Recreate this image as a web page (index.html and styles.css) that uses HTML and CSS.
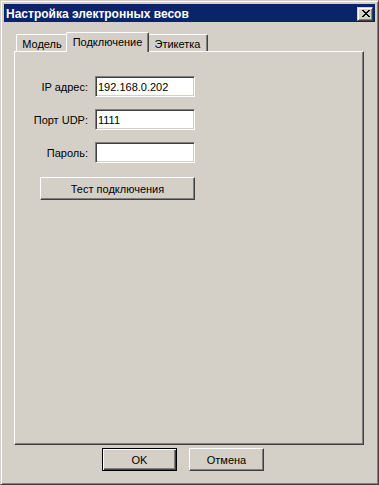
FILE: index.html
```html
<!DOCTYPE html>
<html lang="ru">
<head>
    <meta charset="UTF-8">
    <title>Настройка электронных весов</title>
    <link rel="stylesheet" href="styles.css">
</head>
<body>
    <div class="window">
        <!-- заголовок окна -->
        <div class="titlebar">
            <span class="title">Настройка электронных весов</span>
            <button class="close-btn" aria-label="Закрыть">
                <svg width="8" height="7" viewBox="0 0 8 7" shape-rendering="crispEdges">
                    <path d="M0 0h2v1H0zM6 0h2v1H6zM1 1h2v1H1zM5 1h2v1H5zM2 2h4v1H2zM3 3h2v1H3zM2 4h4v1H2zM1 5h2v1H1zM5 5h2v1H5zM0 6h2v1H0zM6 6h2v1H6z" fill="#000"/>
                </svg>
            </button>
        </div>

        <div class="dialog-body">
            <!-- вкладки -->
            <div class="tabs">
                <div class="tab tab-model">Модель</div>
                <div class="tab tab-conn active">Подключение</div>
                <div class="tab tab-label">Этикетка</div>
            </div>

            <div class="tab-panel">
                <div class="form-grid">
                    <label class="field-label">IP адрес:</label>
                    <input class="field" type="text" value="192.168.0.202">

                    <label class="field-label">Порт UDP:</label>
                    <input class="field" type="text" value="1111">

                    <label class="field-label">Пароль:</label>
                    <input class="field" type="password" value="">

                    <button class="btn test-btn">Тест подключения</button>
                </div>
            </div>

            <!-- кнопки диалога -->
            <div class="dialog-buttons">
                <button class="btn default">OK</button>
                <button class="btn">Отмена</button>
            </div>
        </div>
    </div>
</body>
</html>
```

FILE: styles.css
```css
:root {
    /* классическая схема Windows */
    --face: #d4d0c8;
    --highlight: #fff;
    --shadow: #808080;
    --dark-shadow: #404040;
    --caption: #0a246a;
}

* {
    box-sizing: border-box;
}

body {
    margin: 0;
    background: var(--face);
    font-family: "Liberation Sans", Arial, sans-serif;
    font-size: 11px;
    color: #000;
}

.window {
    width: 379px;
    height: 485px;
    padding: 3px;
    background: var(--face);
    border: 1px solid;
    border-color: var(--face) var(--dark-shadow) var(--dark-shadow) var(--face);
    box-shadow: inset 1px 1px var(--highlight), inset -1px -1px var(--shadow);
    display: flex;
    flex-direction: column;
}

/* заголовок */
.titlebar {
    height: 18px;
    background: var(--caption);
    display: flex;
    align-items: center;
    justify-content: space-between;
    padding: 0 2px 0 2px;
}

.title {
    color: #fff;
    font-weight: bold;
    font-size: 12px;
    line-height: 18px;
    padding-top: 1px;
}

.close-btn {
    width: 16px;
    height: 14px;
    padding: 0;
    margin-top: 1px;
    background: var(--face);
    border: 1px solid;
    border-color: var(--face) var(--dark-shadow) var(--dark-shadow) var(--face);
    box-shadow: inset 1px 1px var(--highlight), inset -1px -1px var(--shadow);
    display: flex;
    align-items: center;
    justify-content: center;
}

.close-btn svg {
    display: block;
    margin: 0 0 0 1px;
}

/* содержимое */
.dialog-body {
    padding: 10px 11px 0 10px;
}

.tabs {
    display: flex;
    align-items: flex-end;
    height: 19px;
    padding-left: 2px;
}

.tab {
    height: 17px;
    padding-top: 3px;
    text-align: center;
    line-height: 13px;
    background: var(--face);
    border-top: 1px solid var(--highlight);
    border-left: 1px solid var(--highlight);
    border-right: 1px solid var(--dark-shadow);
    border-top-left-radius: 2px;
    border-top-right-radius: 2px;
    box-shadow: inset -1px 0 var(--shadow);
}

.tab-model {
    width: 52px;
}

.tab-conn {
    width: 78px;
}

.tab-label {
    width: 61px;
}

.tab.active {
    width: 83px;
    height: 20px;
    padding-top: 3px;
    margin: 0 -2px -1px;
    position: relative;
    z-index: 1;
}

.tab-panel {
    height: 394px;
    border: 1px solid;
    border-color: var(--highlight) var(--dark-shadow) var(--dark-shadow) var(--highlight);
    box-shadow: inset -1px -1px var(--shadow);
    padding-top: 24px;
}

.form-grid {
    display: grid;
    grid-template-columns: 73px 100px;
    column-gap: 7px;
    row-gap: 12px;
    align-items: center;
}

.field-label {
    text-align: right;
    white-space: nowrap;
    padding-top: 1px;
}

.field {
    height: 21px;
    width: 100px;
    margin: 0;
    padding: 1px 2px 0;
    font: inherit;
    color: #000;
    background: #fff;
    border: 1px solid;
    border-color: var(--shadow) var(--highlight) var(--highlight) var(--shadow);
    box-shadow: inset 1px 1px var(--dark-shadow), inset -1px -1px var(--face);
    outline: none;
}

.btn {
    width: 75px;
    height: 23px;
    margin: 0;
    padding: 0;
    font: inherit;
    color: #000;
    background: var(--face);
    border: 1px solid;
    border-color: var(--highlight) var(--dark-shadow) var(--dark-shadow) var(--highlight);
    box-shadow: inset -1px -1px var(--shadow);
}

.btn.default {
    border-color: #000;
    box-shadow: inset 1px 1px var(--highlight), inset -1px -1px var(--dark-shadow), inset -2px -2px var(--shadow);
}

.test-btn {
    grid-column: 1 / -1;
    justify-self: end;
    width: 155px;
    margin-top: 2px;
}

.dialog-buttons {
    display: flex;
    gap: 12px;
    padding: 3px 0 0 88px;
}
```
